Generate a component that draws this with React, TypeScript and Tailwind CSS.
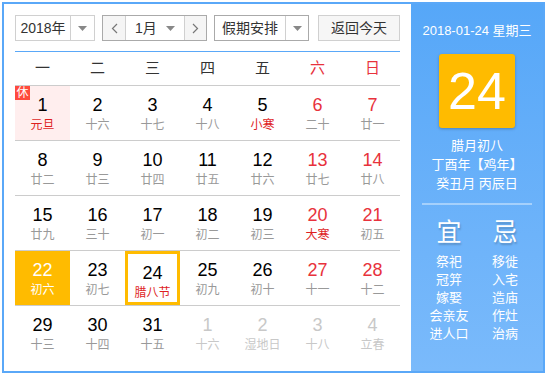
import React from "react";

type Day = {
  d: number;
  lunar: string;
  fest?: boolean;
  other?: boolean;
};

const days: Day[] = [
  { d: 1, lunar: "元旦", fest: true },
  { d: 2, lunar: "十六" },
  { d: 3, lunar: "十七" },
  { d: 4, lunar: "十八" },
  { d: 5, lunar: "小寒", fest: true },
  { d: 6, lunar: "二十" },
  { d: 7, lunar: "廿一" },
  { d: 8, lunar: "廿二" },
  { d: 9, lunar: "廿三" },
  { d: 10, lunar: "廿四" },
  { d: 11, lunar: "廿五" },
  { d: 12, lunar: "廿六" },
  { d: 13, lunar: "廿七" },
  { d: 14, lunar: "廿八" },
  { d: 15, lunar: "廿九" },
  { d: 16, lunar: "三十" },
  { d: 17, lunar: "初一" },
  { d: 18, lunar: "初二" },
  { d: 19, lunar: "初三" },
  { d: 20, lunar: "大寒", fest: true },
  { d: 21, lunar: "初五" },
  { d: 22, lunar: "初六" },
  { d: 23, lunar: "初七" },
  { d: 24, lunar: "腊八节", fest: true },
  { d: 25, lunar: "初九" },
  { d: 26, lunar: "初十" },
  { d: 27, lunar: "十一" },
  { d: 28, lunar: "十二" },
  { d: 29, lunar: "十三" },
  { d: 30, lunar: "十四" },
  { d: 31, lunar: "十五" },
  { d: 1, lunar: "十六", other: true },
  { d: 2, lunar: "湿地日", other: true },
  { d: 3, lunar: "十八", other: true },
  { d: 4, lunar: "立春", other: true },
];

const weekdays = ["一", "二", "三", "四", "五", "六", "日"];
const yi = ["祭祀", "冠笄", "嫁娶", "会亲友", "进人口"];
const ji = ["移徙", "入宅", "造庙", "作灶", "治病"];

function Caret() {
  return (
    <svg width="9" height="5" viewBox="0 0 9 5">
      <path d="M0 0 L9 0 L4.5 5 Z" fill="#888" />
    </svg>
  );
}

function Cell({ day, col }: { day: Day; col: number }) {
  const weekend = col >= 5;
  const selected = !day.other && day.d === 22;
  const today = !day.other && day.d === 24;
  const holiday = !day.other && day.d === 1;

  let numColor = weekend ? "text-[#e8323c]" : "text-black";
  let lunarColor = day.fest ? "text-[#de1f1f]" : "text-[#999]";
  if (day.other) {
    numColor = "text-[#c8c8c8]";
    lunarColor = "text-[#c8c8c8]";
  }
  if (selected) {
    numColor = "text-white";
    lunarColor = "text-white";
  }

  return (
    <div
      className={`relative flex h-[54px] flex-col items-center pt-[9px] ${
        selected ? "bg-[#ffbb00]" : holiday ? "bg-[#ffeeee]" : ""
      } ${today ? "border-[3px] border-[#ffbb00] pt-[6px]" : ""}`}
    >
      {holiday && (
        <span className="absolute left-0 top-0 flex h-[14px] w-[15px] items-center justify-center bg-[#ff4a3d] text-[12px] leading-none text-white">
          休
        </span>
      )}
      <span className={`text-[18px] leading-[20px] ${numColor}`}>{day.d}</span>
      <span className={`mt-[1px] text-[12px] leading-[18px] ${lunarColor}`}>{day.lunar}</span>
    </div>
  );
}

export default function App() {
  const rows = [0, 1, 2, 3, 4].map((r) => days.slice(r * 7, r * 7 + 7));

  return (
    <div
      className="h-[376px] w-[545px] bg-white pl-[2px] pt-[2px]"
      style={{ fontFamily: '"Liberation Sans", "Noto Sans CJK SC", sans-serif' }}
    >
      <div className="flex h-[371px] w-[543px] border-2 border-[#5aa8f8]">
        {/* left */}
        <div className="w-[407px] px-[11px] pt-[11px]">
          <div className="flex h-[26px] items-stretch text-[14px] text-[#333]">
            <div className="flex w-[80px] border border-[#d0d0d0] bg-white">
              <div className="flex w-[54px] items-center justify-center">2018年</div>
              <div className="flex flex-1 items-center justify-center border-l border-[#d0d0d0]">
                <Caret />
              </div>
            </div>
            <div className="ml-[7px] flex w-[105px] border border-[#aaa] bg-white">
              <div className="flex w-[23px] items-center justify-center border-r border-[#d0d0d0] bg-[#f5f5f5] text-[#666]">
                <svg width="7" height="11" viewBox="0 0 7 11">
                  <path d="M6 1 L1.5 5.5 L6 10" fill="none" stroke="#777" strokeWidth="1.2" />
                </svg>
              </div>
              <div className="flex flex-1 items-center pl-[9px]">
                <span>1月</span>
                <span className="ml-auto mr-[9px] flex">
                  <Caret />
                </span>
              </div>
              <div className="flex w-[22px] items-center justify-center border-l border-[#d0d0d0] bg-[#f5f5f5]">
                <svg width="7" height="11" viewBox="0 0 7 11">
                  <path d="M1 1 L5.5 5.5 L1 10" fill="none" stroke="#777" strokeWidth="1.2" />
                </svg>
              </div>
            </div>
            <div className="ml-[7px] flex w-[95px] border border-[#aaa] bg-white">
              <div className="flex w-[70px] items-center justify-center">假期安排</div>
              <div className="flex flex-1 items-center justify-center border-l border-[#d0d0d0]">
                <Caret />
              </div>
            </div>
            <div className="ml-[9px] flex w-[82px] items-center justify-center border border-[#d0d0d0] bg-[#f6f6f6]">
              返回今天
            </div>
          </div>

          <div className="mt-[10px] h-px bg-[#5aa8f8]" />

          <div className="grid h-[33px] grid-cols-7 items-center text-[15px] text-[#333]">
            {weekdays.map((w, i) => (
              <div key={w} className={`text-center ${i >= 5 ? "text-[#e8323c]" : ""}`}>
                {w}
              </div>
            ))}
          </div>

          {rows.map((row, r) => (
            <div key={r} className="grid grid-cols-7 border-t border-[#cccccc]">
              {row.map((day, c) => (
                <Cell key={c} day={day} col={c} />
              ))}
            </div>
          ))}
        </div>

        {/* right */}
        <div className="flex flex-1 flex-col items-center bg-gradient-to-b from-[#56a7f8] to-[#7abafb] text-white">
          <div className="mt-[18px] text-[13px] leading-[18px]">2018-01-24 星期三</div>
          <div className="mt-[14px] flex h-[74px] w-[76px] items-center justify-center rounded-[3px] bg-[#ffbb00] text-[52px] leading-none shadow-[0_1px_3px_rgba(0,0,0,0.25)]">
            24
          </div>
          <div className="mt-[8px] text-[13px] leading-[19px]">腊月初八</div>
          <div className="text-[13px] leading-[19px]">丁酉年【鸡年】</div>
          <div className="text-[13px] leading-[19px]">癸丑月 丙辰日</div>
          <div className="mt-[10px] h-[2px] w-[110px] bg-white/40" />
          <div className="mt-[12px] flex w-full justify-center">
            <div className="flex w-[56px] flex-col items-center">
              <div className="text-[25px] leading-[30px] [text-shadow:1px_2px_2px_rgba(0,0,0,0.2)]">宜</div>
              <div className="mt-[6px] flex flex-col items-center text-[13px] leading-[18px]">
                {yi.map((t) => (
                  <span key={t}>{t}</span>
                ))}
              </div>
            </div>
            <div className="flex w-[56px] flex-col items-center">
              <div className="text-[25px] leading-[30px] [text-shadow:1px_2px_2px_rgba(0,0,0,0.2)]">忌</div>
              <div className="mt-[6px] flex flex-col items-center text-[13px] leading-[18px]">
                {ji.map((t) => (
                  <span key={t}>{t}</span>
                ))}
              </div>
            </div>
          </div>
        </div>
      </div>
    </div>
  );
}
